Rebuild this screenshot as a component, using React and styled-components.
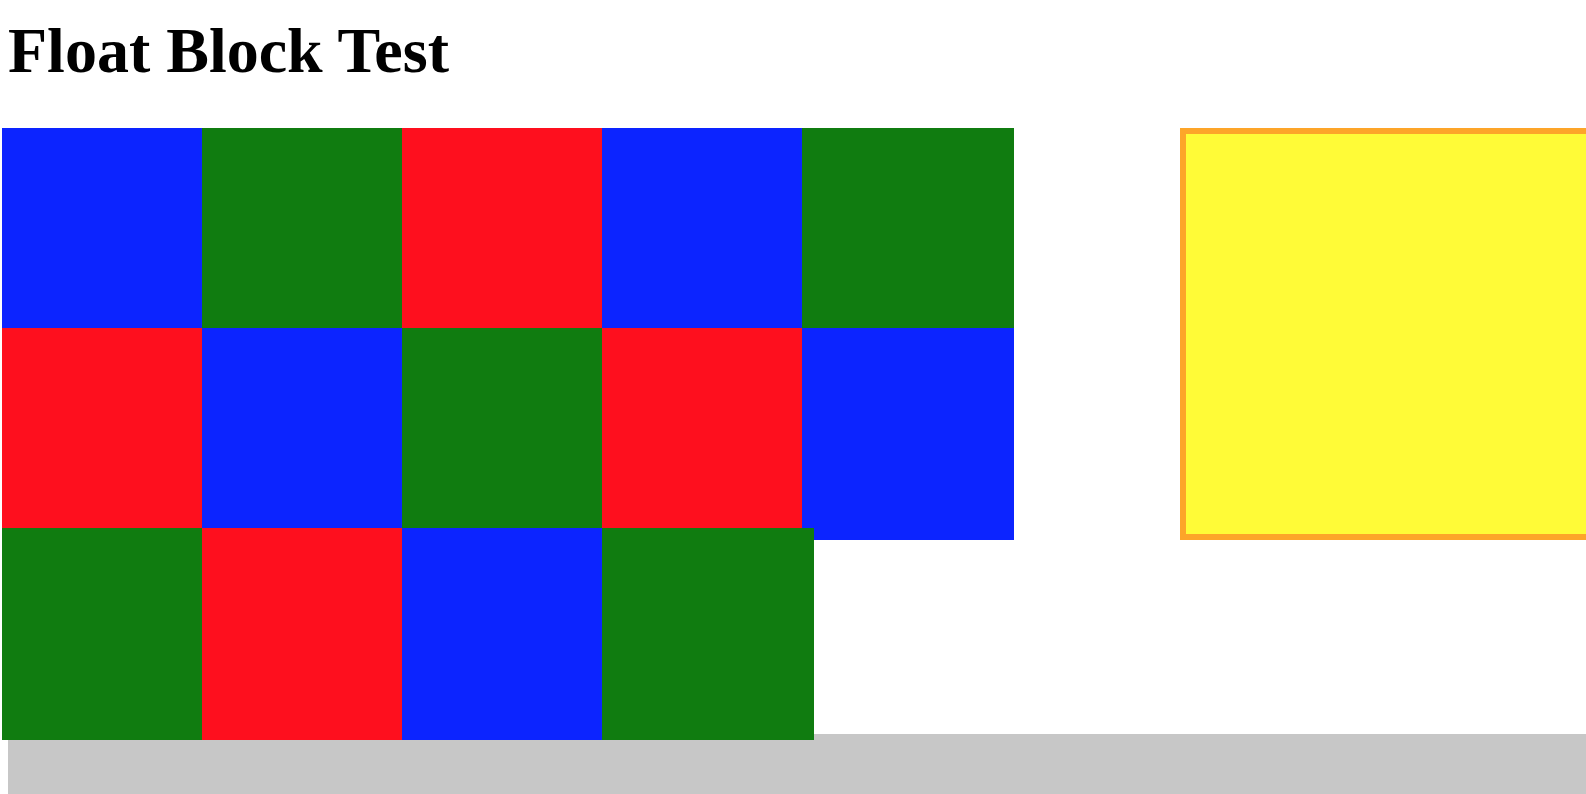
import React from 'react'
import styled, { createGlobalStyle } from 'styled-components'

const GlobalStyle = createGlobalStyle`
  html, body {
    margin: 0;
    padding: 0;
    background: #fff;
    overflow: hidden;
  }
  body {
    padding: 8px;
    font-family: "Liberation Serif", "Times New Roman", serif;
  }
`

const Title = styled.h1`
  margin: 8px 0 42px;
  font-size: 64px;
  line-height: 70px;
  font-weight: bold;
  color: #000;
`

const Stage = styled.div`
  display: flex;
  align-items: flex-start;
  margin-left: -6px;
`

const BlockGrid = styled.div`
  display: grid;
  grid-template-columns: repeat(5, 200px);
  grid-auto-rows: 200px;
  width: 1000px;
  flex-shrink: 0;
`

const colors = {
  blue: 'rgb(12, 36, 255)',
  green: 'rgb(16, 124, 16)',
  red: 'rgb(254, 15, 30)',
}

const Block = styled.div`
  width: 212px;
  height: 212px;
  background: ${p => colors[p.color]};
`

const Panel = styled.div`
  flex-shrink: 0;
  box-sizing: border-box;
  width: 480px;
  height: 412px;
  margin-left: 178px;
  background: rgb(255, 251, 55);
  border: 6px solid rgb(253, 165, 41);
`

const Footer = styled.div`
  height: 80px;
  margin: 6px -8px 0 0;
  background: rgb(199, 199, 199);
`

const cycle = ['blue', 'green', 'red']
const blocks = Array.from({ length: 14 }, (_, i) => cycle[i % 3])

export default function App() {
  return (
    <>
      <GlobalStyle />
      <Title>Float Block Test</Title>
      <Stage>
        <BlockGrid>
          {blocks.map((c, i) => (
            <Block key={i} color={c} />
          ))}
        </BlockGrid>
        <Panel />
      </Stage>
      <Footer />
    </>
  )
}
